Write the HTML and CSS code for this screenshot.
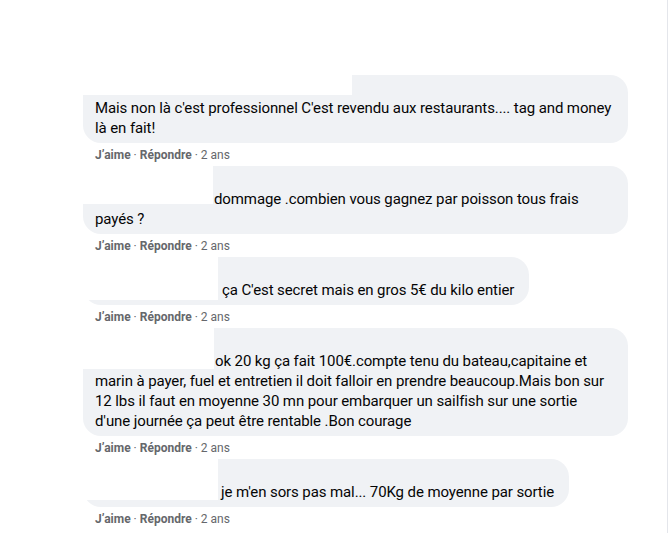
FILE: index.html
```html
<!DOCTYPE html>
<html lang="fr">
<head>
  <meta charset="UTF-8" />
  <meta name="viewport" content="width=device-width, initial-scale=1.0"/>
  <title>Commentaires</title>
  <link rel="stylesheet" href="styles.css">
</head>
<body>
  <div class="thread">

    <div class="comment">
      <div class="bubble">
        <span class="redact redact-1"></span>
        <div class="author"></div>
        <p class="text">Mais non là c'est professionnel C'est revendu aux restaurants.... tag and money là en fait!</p>
      </div>
      <div class="actions"><b>J’aime</b> · <b>Répondre</b> · 2 ans</div>
    </div>

    <div class="comment">
      <div class="bubble">
        <span class="redact redact-2"></span>
        <div class="author"></div>
        <p class="text"><span class="mention mention-2"></span>dommage .combien vous gagnez par poisson tous frais payés ?</p>
      </div>
      <div class="actions"><b>J’aime</b> · <b>Répondre</b> · 2 ans</div>
    </div>

    <div class="comment">
      <div class="bubble">
        <span class="redact redact-3"></span>
        <div class="author"></div>
        <p class="text"><span class="mention mention-3"></span>ça C'est secret mais en gros 5€ du kilo entier</p>
      </div>
      <div class="actions"><b>J’aime</b> · <b>Répondre</b> · 2 ans</div>
    </div>

    <div class="comment">
      <div class="bubble">
        <span class="redact redact-4"></span>
        <div class="author"></div>
        <p class="text"><span class="mention mention-4"></span>ok 20 kg ça fait 100€.compte tenu du bateau,capitaine et marin à payer, fuel et entretien il doit falloir en prendre beaucoup.Mais bon sur 12 lbs il faut en moyenne 30 mn pour embarquer un sailfish sur une sortie d'une journée ça peut être rentable .Bon courage</p>
      </div>
      <div class="actions"><b>J’aime</b> · <b>Répondre</b> · 2 ans</div>
    </div>

    <div class="comment">
      <div class="bubble">
        <span class="redact redact-5"></span>
        <div class="author"></div>
        <p class="text"><span class="mention mention-5"></span>je m'en sors pas mal... 70Kg de moyenne par sortie</p>
      </div>
      <div class="actions"><b>J’aime</b> · <b>Répondre</b> · 2 ans</div>
    </div>

  </div>
</body>
</html>
```

FILE: styles.css
```css
body {
  margin: 0;
  background: #fff;
  color: #050505;
  font-family: Roboto, "Noto Sans", sans-serif;
}
.thread {
  width: 668px;
  height: 533px;
  box-sizing: border-box;
  padding: 75px 0 0 83px;
  border-right: 1px solid #e4e6eb;
  overflow: hidden;
}
.bubble {
  position: relative;
  width: fit-content;
  max-width: 545px;
  box-sizing: border-box;
  padding: 7px 15px 5px 12px;
  background: #f0f2f5;
  border-radius: 18px;
}
.author {
  height: 16px;
}
.text {
  margin: 0;
  font-size: 15px;
  line-height: 20px;
  letter-spacing: -0.1px;
}
.mention {
  display: inline-block;
}
.mention-2 { width: 119px; }
.mention-3 { width: 127px; }
.mention-4 { width: 120px; }
.mention-5 { width: 126px; }

/* white boxes hiding the names */
.redact {
  position: absolute;
  left: 0;
  top: 0;
  background: #fff;
}
.redact-1 { width: 269px; height: 20px; }
.redact-2 { width: 130px; height: 38px; }
.redact-3 { width: 135px; height: 43px; }
.redact-4 { width: 131px; height: 41px; }
.redact-5 { width: 135px; height: 41px; }

.actions {
  padding: 4px 0 3px 12px;
  font-size: 12px;
  line-height: 16px;
  color: #65676b;
}
.actions b {
  font-weight: 700;
}
```
